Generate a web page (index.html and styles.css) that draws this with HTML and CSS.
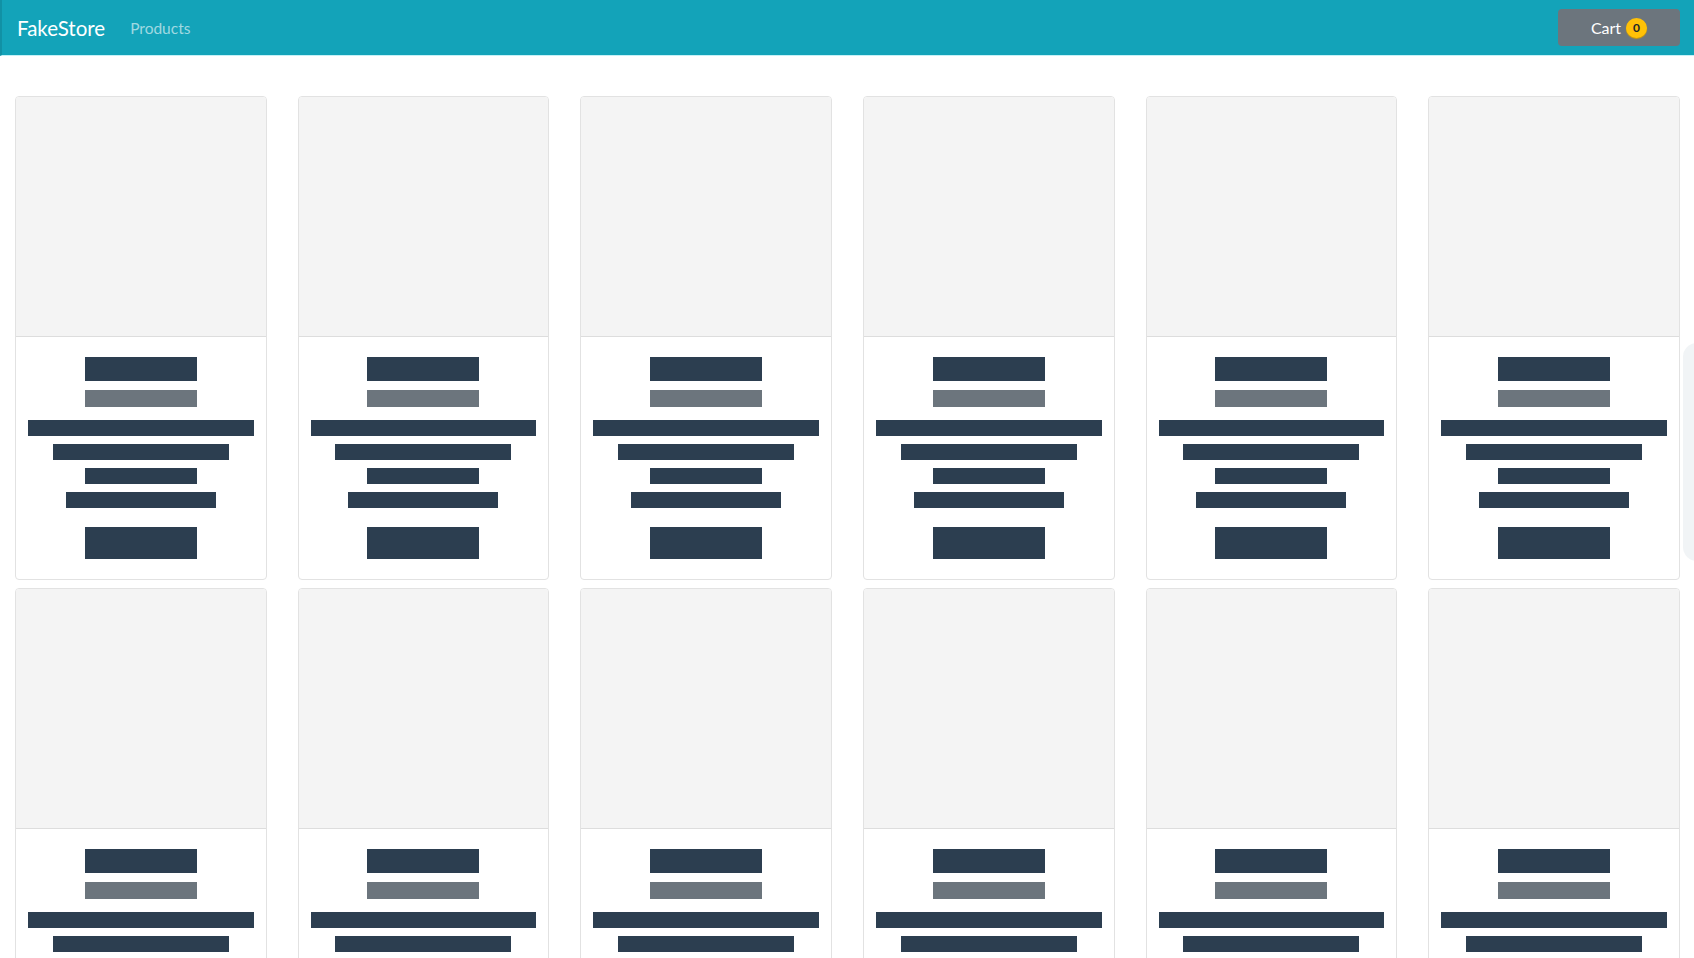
FILE: index.html
```html
<!DOCTYPE html>
<html>
  <head>
    <meta charset="UTF-8" />
    <title>FakeStore</title>
    <link rel="stylesheet" href="styles.css">
  </head>
  <body>

    <nav class="navbar">
      <div class="nav-left">
        <a class="brand" href="#">FakeStore</a>
        <a class="nav-link" href="#">Products</a>
      </div>
      <button class="cart-btn">Cart <span class="badge">0</span></button>
    </nav>

    <main class="products" id="products"></main>

    <div class="edge-glow"></div>

    <script>
      const products = document.getElementById('products');

      // Loading placeholders while products are fetched
      for (let i = 0; i < 12; i++) {
        const card = document.createElement('div');
        card.className = 'card';
        card.innerHTML = `
          <div class="card-img"></div>
          <div class="card-body">
            <span class="ph ph-title"></span>
            <span class="ph ph-price"></span>
            <span class="ph ph-line ph-full"></span>
            <span class="ph ph-line ph-w78"></span>
            <span class="ph ph-line ph-half"></span>
            <span class="ph ph-line ph-w66"></span>
            <span class="ph ph-btn"></span>
          </div>`;
        products.appendChild(card);
      }
    </script>

  </body>
</html>
```

FILE: styles.css
```css
body {
  margin: 0;
  font-family: 'Lato', 'Open Sans', sans-serif;
  background: #fff;
  overflow: hidden;
}

.navbar {
  height: 56px;
  box-sizing: border-box;
  background: #13a3b9;
  border-left: 2px solid #1191a5;
  border-bottom: 1px solid #c4f1f7;
  display: flex;
  align-items: center;
  justify-content: space-between;
  padding: 0 14px 0 15px;
}

.nav-left {
  display: flex;
  align-items: center;
  gap: 25px;
}

.brand {
  color: #fff;
  font-size: 20.5px;
  text-decoration: none;
}

.nav-link {
  color: rgba(255, 255, 255, 0.6);
  font-size: 15.5px;
  text-decoration: none;
}

.cart-btn {
  width: 122px;
  height: 37px;
  border: none;
  border-radius: 4px;
  background: #6c757d;
  color: #fff;
  font-family: inherit;
  font-size: 16px;
  display: flex;
  align-items: center;
  justify-content: center;
  gap: 5px;
  padding: 0;
}

.badge {
  width: 21px;
  height: 20px;
  border-radius: 50%;
  background: #ffc107;
  box-shadow: 0 1px 1px #d39e00;
  color: #212529;
  font-size: 12px;
  font-weight: 700;
  display: flex;
  align-items: center;
  justify-content: center;
}

.products {
  display: grid;
  grid-template-columns: repeat(6, 1fr);
  column-gap: 31px;
  row-gap: 8px;
  padding: 40px 14px 0 15px;
}

.card {
  border: 1px solid #e2e2e2;
  border-radius: 4px;
  overflow: hidden;
  background: #fff;
}

.card-img {
  height: 239px;
  background: #f4f4f4;
  border-bottom: 1px solid #dddddd;
}

.card-body {
  padding: 20px 12px 20px;
  display: flex;
  flex-direction: column;
  align-items: center;
}

.ph {
  display: block;
  background: #2c3e50;
}

.ph-title {
  width: 112px;
  height: 24px;
}

.ph-price {
  width: 112px;
  height: 17px;
  margin-top: 9px;
  background: #6c757d;
}

.ph-line {
  height: 16px;
  margin-top: 8px;
}

.ph-full {
  width: 100%;
  margin-top: 13px;
}

.ph-w78 { width: 176px; }
.ph-half { width: 112px; }
.ph-w66 { width: 150px; }

.ph-btn {
  width: 112px;
  height: 32px;
  margin-top: 19px;
}

.edge-glow {
  position: absolute;
  right: -6px;
  top: 343px;
  width: 17px;
  height: 218px;
  border-radius: 14px 0 0 14px;
  background: #eef1f4;
  opacity: 0.8;
}
```
